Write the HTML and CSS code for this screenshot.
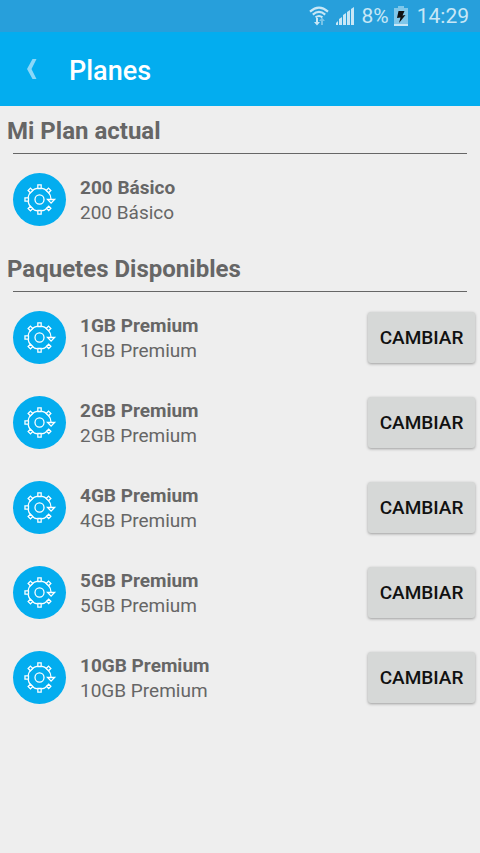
FILE: index.html
```html
<!DOCTYPE html>
<html lang="es">
<head>
    <meta charset="UTF-8">
    <meta name="viewport" content="width=device-width, initial-scale=1.0">
    <title>Planes</title>
    <link rel="stylesheet" href="styles.css">
</head>
<body>
    <svg class="sprite" aria-hidden="true">
        <symbol id="icon-plan" viewBox="0 0 54 54">
            <g fill="none" stroke="#fff" stroke-width="1.3">
                <circle cx="27" cy="27" r="4.6"/>
                <path d="M28.7 15.3A11.8 11.8 0 0 1 35 18.4M36 19.4A11.8 11.8 0 0 1 38.8 27M35 35.6A11.8 11.8 0 0 1 28.7 38.7M25.3 38.7A11.8 11.8 0 0 1 19 35.6M18.4 35A11.8 11.8 0 0 1 15.3 28.7M15.3 25.3A11.8 11.8 0 0 1 18.4 19M19 18.4A11.8 11.8 0 0 1 25.3 15.3"/>
                <path fill="#03adef" d="M25.3 12.2h3.4v3.6h-3.4zM25.3 38.2h3.4v3.6h-3.4zM12.2 25.3h3.6v3.4h-3.6z"/>
                <path fill="#03adef" d="M36.2 15.4l2.4 2.4-2.4 2.4-2.4-2.4zM17.8 15.4l2.4 2.4-2.4 2.4-2.4-2.4zM17.8 33.8l2.4 2.4-2.4 2.4-2.4-2.4zM36.4 33.8l2.2 2.2-2.2 2.2-2.2-2.2z"/>
                <path fill="#03adef" d="M35.2 27h7.2l-3.6 3.7z"/>
            </g>
        </symbol>
    </svg>

    <div class="status-bar">
        <svg class="wifi" viewBox="0 0 20 20" aria-hidden="true">
            <g fill="none" stroke="currentColor" stroke-width="2.1">
                <path d="M1 5.6Q10 -2.4 19 5.6"/>
                <path d="M3.8 8.6Q10 3.2 16.2 8.6"/>
                <path d="M6.6 11.4Q10 8.6 13.4 11.4"/>
            </g>
            <path fill="currentColor" d="M7 12h2v4h2l-3 3.6L5 16h2z"/>
            <path fill="currentColor" opacity=".5" d="M12 19h2v-4h2l-3-3.6L10 15h2z"/>
        </svg>
        <svg class="signal" viewBox="0 0 18 18" aria-hidden="true">
            <path fill="currentColor" d="M0 18v-2l2-2v4zM3 18v-6l3-2v8zM7 18V8l3-2v12zM11 18V5l3-2v15zM15 18V2l3-2v18z"/>
        </svg>
        <span>8%</span>
        <svg class="battery" viewBox="0 0 14 20" aria-hidden="true">
            <path fill="currentColor" opacity=".55" d="M4 0h6v2h4v18H0V2h4z"/>
            <path fill="currentColor" d="M0 18h14v2H0z"/>
            <path fill="#111" d="M4.5 5h6L8.5 9.5l3-.5L5 17l1.5-5.5L3 12z"/>
        </svg>
        <time class="clock">14:29</time>
    </div>

    <header class="toolbar">
        <a class="back" href="#" aria-label="Volver">
            <svg viewBox="0 0 10 20" aria-hidden="true">
                <path fill="currentColor" d="M5.5 0H9.5L4.5 10l5 10h-4L0 10z"/>
            </svg>
        </a>
        <h1>Planes</h1>
    </header>

    <main>
        <section class="plans">
            <h2>Mi Plan actual</h2>
            <ul>
                <li class="plan">
                    <svg class="plan-icon" aria-hidden="true"><use href="#icon-plan"/></svg>
                    <div class="plan-text">
                        <h3>200 Básico</h3>
                        <p>200 Básico</p>
                    </div>
                </li>
            </ul>
        </section>

        <section class="plans">
            <h2>Paquetes Disponibles</h2>
            <ul>
                <li class="plan">
                    <svg class="plan-icon" aria-hidden="true"><use href="#icon-plan"/></svg>
                    <div class="plan-text">
                        <h3>1GB Premium</h3>
                        <p>1GB Premium</p>
                    </div>
                    <button type="button">CAMBIAR</button>
                </li>
                <li class="plan">
                    <svg class="plan-icon" aria-hidden="true"><use href="#icon-plan"/></svg>
                    <div class="plan-text">
                        <h3>2GB Premium</h3>
                        <p>2GB Premium</p>
                    </div>
                    <button type="button">CAMBIAR</button>
                </li>
                <li class="plan">
                    <svg class="plan-icon" aria-hidden="true"><use href="#icon-plan"/></svg>
                    <div class="plan-text">
                        <h3>4GB Premium</h3>
                        <p>4GB Premium</p>
                    </div>
                    <button type="button">CAMBIAR</button>
                </li>
                <li class="plan">
                    <svg class="plan-icon" aria-hidden="true"><use href="#icon-plan"/></svg>
                    <div class="plan-text">
                        <h3>5GB Premium</h3>
                        <p>5GB Premium</p>
                    </div>
                    <button type="button">CAMBIAR</button>
                </li>
                <li class="plan">
                    <svg class="plan-icon" aria-hidden="true"><use href="#icon-plan"/></svg>
                    <div class="plan-text">
                        <h3>10GB Premium</h3>
                        <p>10GB Premium</p>
                    </div>
                    <button type="button">CAMBIAR</button>
                </li>
            </ul>
        </section>
    </main>
</body>
</html>
```
FILE: styles.css
```css
* {
    margin: 0;
    padding: 0;
    box-sizing: border-box;
}

body {
    font-family: Roboto, sans-serif;
    color: #666;
    background: #eee;
    min-height: 100vh;
}

.sprite {
    display: none;
}

.status-bar {
    display: flex;
    align-items: center;
    justify-content: flex-end;
    height: 32px;
    padding-right: 11px;
    background: #279fdb;
    color: #c8e7f6;
    font-size: 21px;
}

.wifi {
    width: 20px;
    height: 20px;
    margin-right: 7px;
}

.signal {
    width: 18px;
    height: 18px;
    margin-right: 8px;
}

.battery {
    width: 14px;
    height: 20px;
    margin: 0 9px 0 5px;
}

.toolbar {
    display: flex;
    align-items: center;
    height: 74px;
    padding-left: 22px;
    background: #03adef;
    color: white;
}

.back {
    display: flex;
    justify-content: center;
    width: 20px;
    margin-right: 27px;
    color: #8bd8f8;
}

.back svg {
    width: 10px;
    height: 20px;
}

.toolbar h1 {
    padding-top: 4px;
    font-size: 27px;
    font-weight: 500;
}

.plans {
    padding: 10px 0 2px;
}

.plans h2 {
    padding-left: 7px;
    font-size: 24px;
    line-height: 30px;
    font-weight: bold;
}

.plans ul {
    margin: 7px 13px 0;
    padding-top: 3px;
    border-top: 1px solid #666;
    list-style: none;
}

.plan {
    display: flex;
    align-items: center;
    height: 85px;
}

.plan-icon {
    width: 53px;
    height: 53px;
    margin-right: 14px;
    border-radius: 50%;
    background: #03adef;
}

.plan-text {
    flex: 1;
    font-size: 19px;
    line-height: 25px;
}

.plan-text h3 {
    font-size: 19px;
    font-weight: bold;
}

.plan button {
    width: 107px;
    height: 51px;
    margin-right: -8px;
    border: none;
    border-radius: 3px;
    background: #d6d8d7;
    box-shadow: 0 1px 3px rgba(0, 0, 0, 0.35);
    color: #111;
    font: 500 19px Roboto, sans-serif;
}
```
